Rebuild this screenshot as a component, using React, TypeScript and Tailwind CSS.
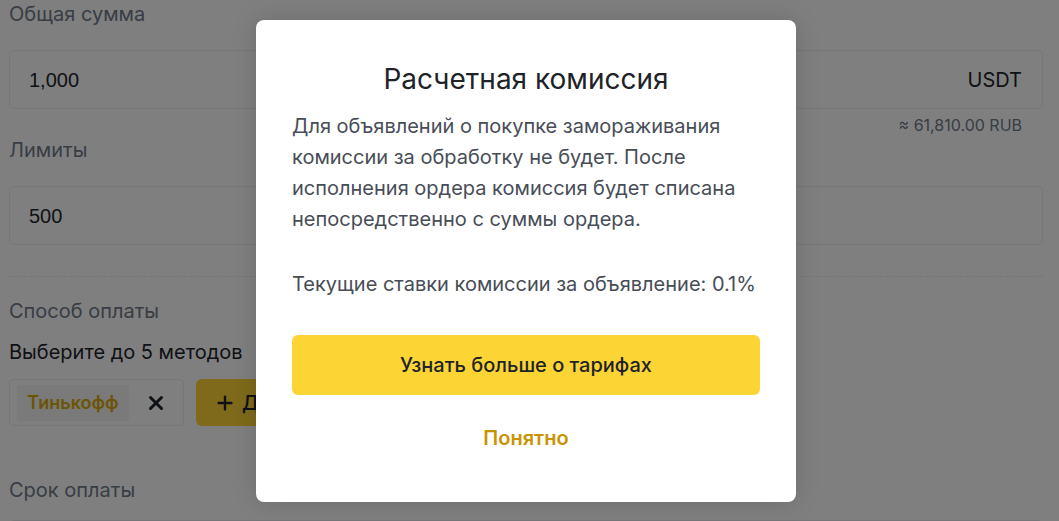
import { X, Plus } from "lucide-react";

const font = "font-['Inter','Noto_Sans',sans-serif]";

function Label({ children, className = "" }: { children: React.ReactNode; className?: string }) {
  return <p className={`text-[20px] leading-[28px] text-[#707A8A] ${className}`}>{children}</p>;
}

export default function App() {
  return (
    <div className={`relative h-[521px] w-full overflow-hidden bg-white ${font}`}>
      {/* form behind the dialog */}
      <div className="pl-[9px] pr-[16px]">
        <Label>Общая сумма</Label>
        <div className="mt-[22px] flex h-[59px] items-center justify-between rounded-[5px] border border-[#EAECEF] pl-[19px] pr-[20px]">
          <span className="font-['Liberation_Sans',sans-serif] text-[20px] text-[#1E2329]">1,000</span>
          <span className="text-[20px] text-[#1E2329]">USDT</span>
        </div>
        <p className="mt-[4px] pr-[21px] text-right text-[16px] leading-[24px] text-[#707A8A]">≈ 61,810.00 RUB</p>

        <Label className="mt-[-1px]">Лимиты</Label>
        <div className="mt-[22px] flex h-[59px] items-center rounded-[5px] border border-[#EAECEF] pl-[19px]">
          <span className="font-['Liberation_Sans',sans-serif] text-[20px] text-[#1E2329]">500</span>
        </div>

        <div className="mt-[31px] border-t border-dashed border-[#EAECEF]" />

        <Label className="mt-[20px]">Способ оплаты</Label>
        <p className="mt-[13px] text-[20px] leading-[28px] text-[#1E2329]">Выберите до 5 методов</p>
        <div className="mt-[13px] flex items-center gap-[12px]">
          <div className="flex h-[47px] w-[175px] items-center rounded-[4px] border border-[#EAECEF] pl-[7px]">
            <span className="flex h-[36px] w-[112px] items-center justify-center rounded-[2px] bg-[#F5F5F5] text-[18px] font-semibold text-[#D9A80A]">
              Тинькофф
            </span>
            <X className="ml-[16px] h-[22px] w-[22px] text-[#1E2329]" strokeWidth={3.2} />
          </div>
          <button className="flex h-[47px] w-[220px] items-center gap-[6px] rounded-[6px] bg-[#FCD535] pl-[18px] text-[20px] font-medium text-[#1E2329]">
            <Plus className="h-[22px] w-[22px]" strokeWidth={2.6} />
            Добавить
          </button>
        </div>

        <Label className="mt-[50px]">Срок оплаты</Label>
        <div className="mt-[16px] h-[59px] rounded-[5px] border border-[#EAECEF]" />
      </div>

      {/* overlay + dialog */}
      <div className="absolute inset-0 flex items-center justify-center bg-black/50 pr-[7px]">
        <div className="flex h-[482px] w-[540px] flex-col rounded-[8px] bg-white px-[36px] pt-[39px] shadow-[0_0_24px_rgba(0,0,0,0.15)]">
          <h2 className="text-center text-[28px] leading-[40px] text-[#1E2329]">Расчетная комиссия</h2>
          <p className="mt-[12px] text-[20px] leading-[31px] text-[#474D57]">
            Для объявлений о покупке замораживания комиссии за обработку не будет. После исполнения ордера комиссия будет
            списана непосредственно с суммы ордера.
          </p>
          <p className="mt-[34px] text-[20px] leading-[31px] text-[#474D57]">Текущие ставки комиссии за объявление: 0.1%</p>
          <button className="mt-[35px] h-[60px] w-full rounded-[6px] bg-[#FCD535] text-[20px] font-medium text-[#1E2329]">
            Узнать больше о тарифах
          </button>
          <button className="mt-[29px] text-[20px] font-semibold leading-[28px] text-[#C99400]">Понятно</button>
        </div>
      </div>
    </div>
  );
}
